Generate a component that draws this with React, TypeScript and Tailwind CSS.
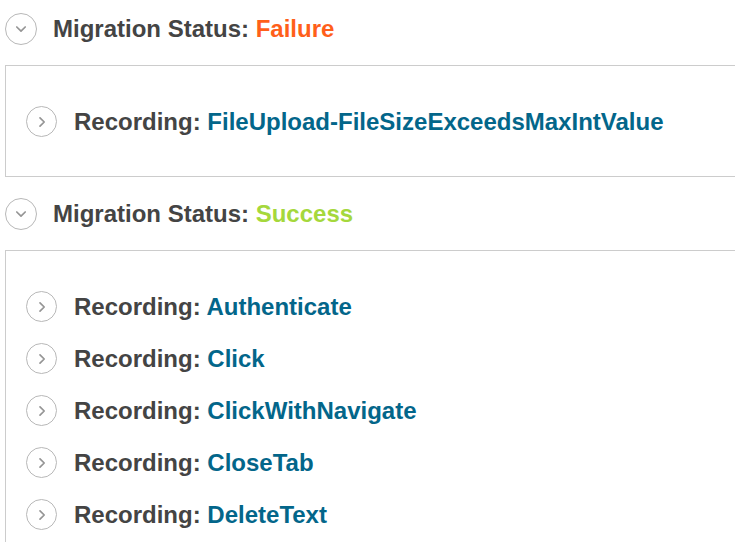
import React from "react";

const font = { fontFamily: '"Liberation Sans", Arial, sans-serif' };

function Circle({ dir, size }: { dir: "down" | "right"; size: "lg" | "sm" }) {
  const cls =
    size === "lg"
      ? "w-[32px] h-[32px]"
      : "w-[31px] h-[31px]";
  return (
    <span
      className={`${cls} shrink-0 rounded-full border border-[#b8b8b8] flex items-center justify-center bg-white`}
    >
      <svg width="14" height="14" viewBox="0 0 14 14" fill="none">
        {dir === "down" ? (
          <path d="M2.8 5 L7 9.2 L11.2 5" stroke="#959595" strokeWidth="1.7" strokeLinecap="round" strokeLinejoin="round" />
        ) : (
          <path d="M5 2.8 L9.2 7 L5 11.2" stroke="#959595" strokeWidth="1.7" strokeLinecap="round" strokeLinejoin="round" />
        )}
      </svg>
    </span>
  );
}

function Heading({ status, color }: { status: string; color: string }) {
  return (
    <div className="flex items-center gap-[16px] pl-[5px] h-[32px]">
      <Circle dir="down" size="lg" />
      <span className="text-[24px] font-bold text-[#444444] leading-none whitespace-nowrap">
        Migration Status: <span className={color}>{status}</span>
      </span>
    </div>
  );
}

function Row({ name }: { name: string }) {
  return (
    <div className="flex items-center gap-[17px] h-[31px]">
      <Circle dir="right" size="sm" />
      <span className="text-[24px] font-bold text-[#444444] leading-none whitespace-nowrap">
        Recording: <span className="text-[#03668a]">{name}</span>
      </span>
    </div>
  );
}

export default function App() {
  return (
    <div className="w-[735px] h-[542px] overflow-hidden bg-white" style={font}>
      <div className="pt-[13px]">
        <Heading status="Failure" color="text-[#ff5f1a]" />
        <div className="mt-[20px] ml-[5px] mr-[-10px] border border-[#cccccc] pl-[20px] pt-[40px] pb-[39px]">
          <Row name="FileUpload-FileSizeExceedsMaxIntValue" />
        </div>
        <div className="mt-[21px]">
          <Heading status="Success" color="text-[#a5d83c]" />
        </div>
        <div className="mt-[20px] ml-[5px] mr-[-10px] border border-[#cccccc] pl-[20px] pt-[40px] pb-[60px] flex flex-col gap-[21px]">
          <Row name="Authenticate" />
          <Row name="Click" />
          <Row name="ClickWithNavigate" />
          <Row name="CloseTab" />
          <Row name="DeleteText" />
        </div>
      </div>
    </div>
  );
}
